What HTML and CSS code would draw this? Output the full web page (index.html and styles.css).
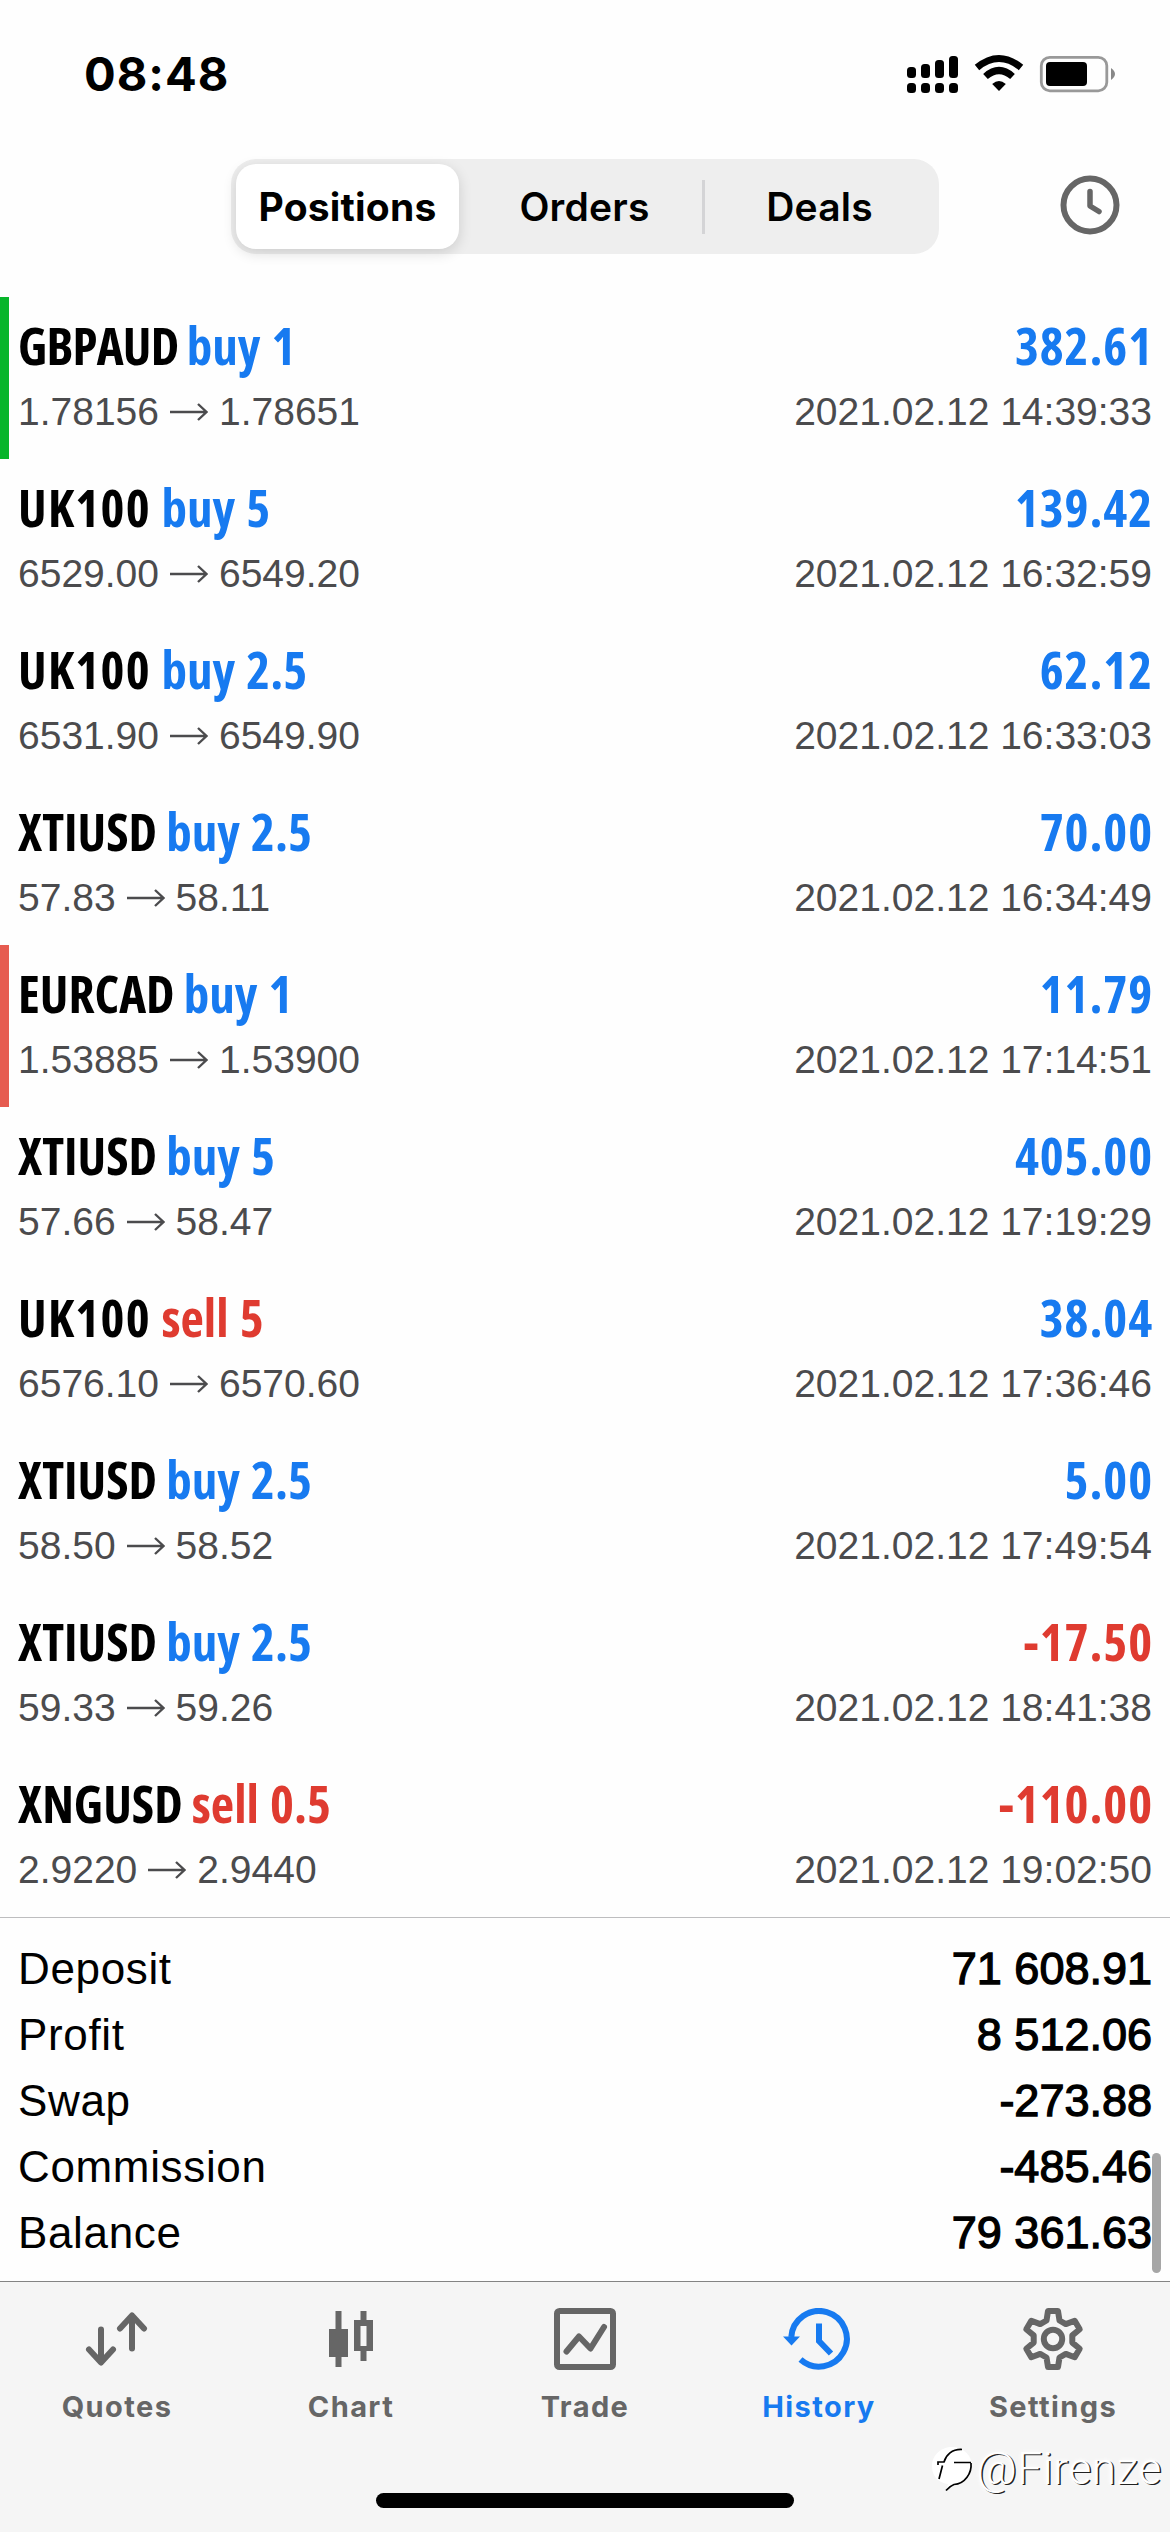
FILE: index.html
```html
<!DOCTYPE html>
<html lang="en">
<head>
<meta charset="utf-8">
<title>History</title>
<link rel="stylesheet" href="styles.css">
</head>
<body>
<div class="screen">
  <header class="status">
    <span class="time">08:48</span>
    <svg class="status-icons" width="210" height="40" viewBox="0 0 210 40">
      <g><rect x="0" y="13" width="9" height="11" rx="3.5"/><rect x="14" y="10" width="9" height="14" rx="3.5"/><rect x="28" y="6" width="9" height="18" rx="3.5"/><rect x="42" y="2" width="9" height="22" rx="3.5"/>
      <rect x="0" y="29" width="9" height="10" rx="3.5"/><rect x="14" y="29" width="9" height="10" rx="3.5"/><rect x="28" y="29" width="9" height="10" rx="3.5"/><rect x="42" y="29" width="9" height="10" rx="3.5"/></g>
      <path d="M92 37 L85.2 30 Q92 24 98.800 30 Z"/>
      <path d="M78.500 22.500 Q92 10.500 105.500 22.500" fill="none" stroke="#000" stroke-width="7"/>
      <path d="M70 13.500 Q92 -4.500 114 13.500" fill="none" stroke="#000" stroke-width="7"/>
      <rect x="134.300" y="3.300" width="65.500" height="33.500" rx="8.500" fill="none" stroke="#999" stroke-width="2.800"/>
      <rect x="139" y="8" width="41" height="24" rx="4"/>
      <path d="M204 14 Q208 17 208 20 Q208 23 204 26 Z" fill="#888"/>
    </svg>
  </header>

  <nav class="topbar">
    <div class="segments">
      <span class="segment selected">Positions</span>
      <span class="segment orders">Orders</span>
      <span class="divider"></span>
      <span class="segment">Deals</span>
    </div>
    <svg class="clock" width="60" height="60" viewBox="0 0 60 60" fill="none" stroke="#666" stroke-width="6" stroke-linecap="round" stroke-linejoin="round"><circle cx="30" cy="30" r="26.500"/><path d="M30 16.500V31L39 36.500" stroke-width="5.500"/></svg>
  </nav>

  <main class="deals" id="deals"></main>

  <section class="summary">
    <div class="line"><span>Deposit</span><b>71 608.91</b></div>
    <div class="line"><span>Profit</span><b>8 512.06</b></div>
    <div class="line"><span>Swap</span><b>-273.88</b></div>
    <div class="line"><span>Commission</span><b>-485.46</b></div>
    <div class="line"><span>Balance</span><b>79 361.63</b></div>
    <i class="scroll-thumb"></i>
  </section>

  <footer class="tabbar">
    <div class="tabs">
      <div class="tab">
        <svg width="64" height="62" viewBox="0 0 64 62" fill="none" stroke="currentColor" stroke-width="6" stroke-linecap="round" stroke-linejoin="round"><path d="M16 21.500V54M4 41.500L16 54.500 28 41.500M47 40.500V8M35 20.500L47 7.500 59 20.500"/></svg>
        <span>Quotes</span>
      </div>
      <div class="tab">
        <svg width="44" height="62" viewBox="0 0 44 62" fill="currentColor"><path d="M6.500 3h6v18H19v28h-6.500v10h-6V49H0V21h6.500zM31.500 3h6v9H44v31h-6.500v10h-6V43H25V12h6.500zM31.500 18v20h6V18z" fill-rule="evenodd"/></svg>
        <span>Chart</span>
      </div>
      <div class="tab">
        <svg width="62" height="62" viewBox="0 0 62 62" fill="none" stroke="currentColor" stroke-width="6" stroke-linecap="round" stroke-linejoin="round"><rect x="3" y="3" width="56" height="56" rx="2.500"/><path d="M12.500 43.500L25 28.500 36.500 40.500 50 19"/></svg>
        <span>Trade</span>
      </div>
      <div class="tab active">
        <svg width="68" height="62" viewBox="0 0 68 62" fill="none" stroke="currentColor" stroke-width="6"><path d="M8.300 29A27.800 27.800 0 1 1 17.500 51.500M36 15.500V33L48 45.500"/><path d="M0 28.500H17L8.500 37.500Z" fill="currentColor" stroke="none"/></svg>
        <span>History</span>
      </div>
      <div class="tab">
        <svg width="62" height="62" viewBox="-31 -31 62 62" fill="none" stroke="currentColor" stroke-width="6" stroke-linejoin="round"><path d="M-5 -28H5L6.500 -18.500 12.800 -14.900 21.700 -18.300 26.700 -9.700 19.300 -3.600V3.600L26.700 9.700 21.700 18.300 12.800 14.900 6.500 18.500 5 28H-5L-6.500 18.500 -12.800 14.900 -21.700 18.300 -26.700 9.700 -19.300 3.600V-3.600L-26.700 -9.700 -21.700 -18.300 -12.800 -14.900 -6.500 -18.500Z"/><circle r="9.200"/></svg>
        <span>Settings</span>
      </div>
    </div>
    <div class="home"></div>
    <div class="watermark">
      <svg width="42" height="46" viewBox="0 0 42 46" fill="none" stroke="#000" stroke-width="1.700"><path d="M20 1C9 1 0 9 0 20 0 32 8 37 16 38L14 45C22 37 40 38 40 20 40 9 31 1 20 1Z" fill="#fff" stroke="none"/><path d="M6 19V16H12C14 9 20 3 30 3.500M22 16.500H39M39 17C40 27 33 38 22 38.500Q18 40 14 44.500M10.500 19.500L7 33"/></svg>
      <span>@Firenze</span>
    </div>
  </footer>
</div>
<script src="deals.js"></script>
</body>
</html>
```
FILE: styles.css
```css
* { box-sizing: border-box; }
body { margin: 0; background: #fff; color: #000; font-family: "Liberation Sans", Arial, sans-serif; }
.screen { width: 1170px; height: 2532px; display: flex; flex-direction: column; overflow: hidden; background: #fefefe; }

.status { height: 159px; flex: none; display: flex; justify-content: space-between; align-items: flex-start; padding: 44px 53px 0 84px; }
.time { font: 700 47px/60px Inter, sans-serif; letter-spacing: 1px; }
.status-icons { margin-top: 10px; }

.topbar { height: 138px; flex: none; display: flex; justify-content: space-between; align-items: flex-start; padding: 0 50px 0 231px; }
.segments { width: 708px; height: 95px; display: flex; align-items: center; padding: 5px; border-radius: 25px; background: #eee; }
.segment { flex: 1; text-align: center; font: 600 39px/85px Inter, sans-serif; letter-spacing: .2px; }
.segment.selected { flex: none; width: 223px; height: 85px; border-radius: 20px; background: #fff; font-weight: 700; box-shadow: 0 4px 14px rgba(0, 0, 0, .14); }
.segment.orders { flex: none; width: 243px; padding-left: 8px; }
.divider { width: 3px; height: 54px; background: #d4d4d6; }
.clock { margin-top: 16px; }

.deals { flex: none; }
.deal { height: 162px; padding: 18px 18px 0; border-left: 0 solid; display: flex; flex-direction: column; }
.deal.profit-mark { border-left: 9px solid #07b52b; padding-left: 9px; }
.deal.loss-mark { border-left: 9px solid #e65b50; padding-left: 9px; }
.deal-head, .deal-info { display: flex; justify-content: space-between; }
.deal-head { font: 660 51px/60px "Open Sans", sans-serif; font-stretch: 75%; }
.deal-head .buy, .deal-head .sell { word-spacing: 2px; }
.symbol-GBPAUD { letter-spacing: -.8px; }
.symbol-UK100 { letter-spacing: 1.3px; }
.deal-info { font-size: 39px; line-height: 73px; color: #4b4b4d; }
.prices { display: flex; align-items: center; gap: 11px; }
.deal-head .amount { letter-spacing: .9px; margin-right: -1px; }
.buy { color: #177af0; }
.sell { color: #df3b30; }

.summary { position: relative; flex: 1; border-top: 1px solid #bdbdbf; padding: 18px 18px 0; }
.line { display: flex; justify-content: space-between; font-size: 44px; line-height: 66px; letter-spacing: .65px; }
.line b { font-weight: 400; font-size: 45px; letter-spacing: 0; -webkit-text-stroke: 1.3px #000; }
.scroll-thumb { position: absolute; right: 9px; bottom: 8px; width: 9px; height: 120px; border-radius: 5px; background: #a6a6a6; }

.tabbar { position: relative; height: 251px; flex: none; border-top: 1px solid #848484; background: #f5f5f5; }
.tabs { display: flex; padding-top: 26px; }
.tab { flex: 1; display: flex; flex-direction: column; align-items: center; gap: 17px; color: #666; font: 650 29px/40px Inter, sans-serif; letter-spacing: 1.4px; }
.tab.active { color: #177af0; }
.tab.active svg { margin-right: 5px; }
.home { width: 418px; height: 15px; margin: 66px auto 0; border-radius: 8px; background: #000; }
.watermark { position: absolute; right: 8px; bottom: 37px; display: flex; align-items: center; gap: 2px; color: #fff; font: 300 44px/52px Roboto, sans-serif; letter-spacing: .7px; text-shadow: 1.5px 1px 0 #222, 0 0 4px #fff; }
```
FILE: deals.js
```javascript
const deals = [
  ["GBPAUD", "buy", "1", "382.61", "1.78156", "1.78651", "14:39:33", "profit-mark"],
  ["UK100", "buy", "5", "139.42", "6529.00", "6549.20", "16:32:59"],
  ["UK100", "buy", "2.5", "62.12", "6531.90", "6549.90", "16:33:03"],
  ["XTIUSD", "buy", "2.5", "70.00", "57.83", "58.11", "16:34:49"],
  ["EURCAD", "buy", "1", "11.79", "1.53885", "1.53900", "17:14:51", "loss-mark"],
  ["XTIUSD", "buy", "5", "405.00", "57.66", "58.47", "17:19:29"],
  ["UK100", "sell", "5", "38.04", "6576.10", "6570.60", "17:36:46"],
  ["XTIUSD", "buy", "2.5", "5.00", "58.50", "58.52", "17:49:54"],
  ["XTIUSD", "buy", "2.5", "-17.50", "59.33", "59.26", "18:41:38"],
  ["XNGUSD", "sell", "0.5", "-110.00", "2.9220", "2.9440", "19:02:50"]
];
const arrow = '<svg width="38" height="18" viewBox="0 0 38 18" fill="none" stroke="currentColor" stroke-width="2.4"><path d="M0 9H36M28 1L36.500 9 28 17"/></svg>';
document.getElementById("deals").innerHTML = deals.map(([symbol, side, volume, amount, open, close, time, mark = ""]) => `
  <article class="deal ${mark}">
    <div class="deal-head"><span><span class="symbol-${symbol}">${symbol} </span><span class="${side}">${side} ${volume}</span></span><span class="amount ${amount[0] === "-" ? "sell" : "buy"}">${amount}</span></div>
    <div class="deal-info"><span class="prices">${open}${arrow}${close}</span><span>2021.02.12 ${time}</span></div>
  </article>`).join("");
```
